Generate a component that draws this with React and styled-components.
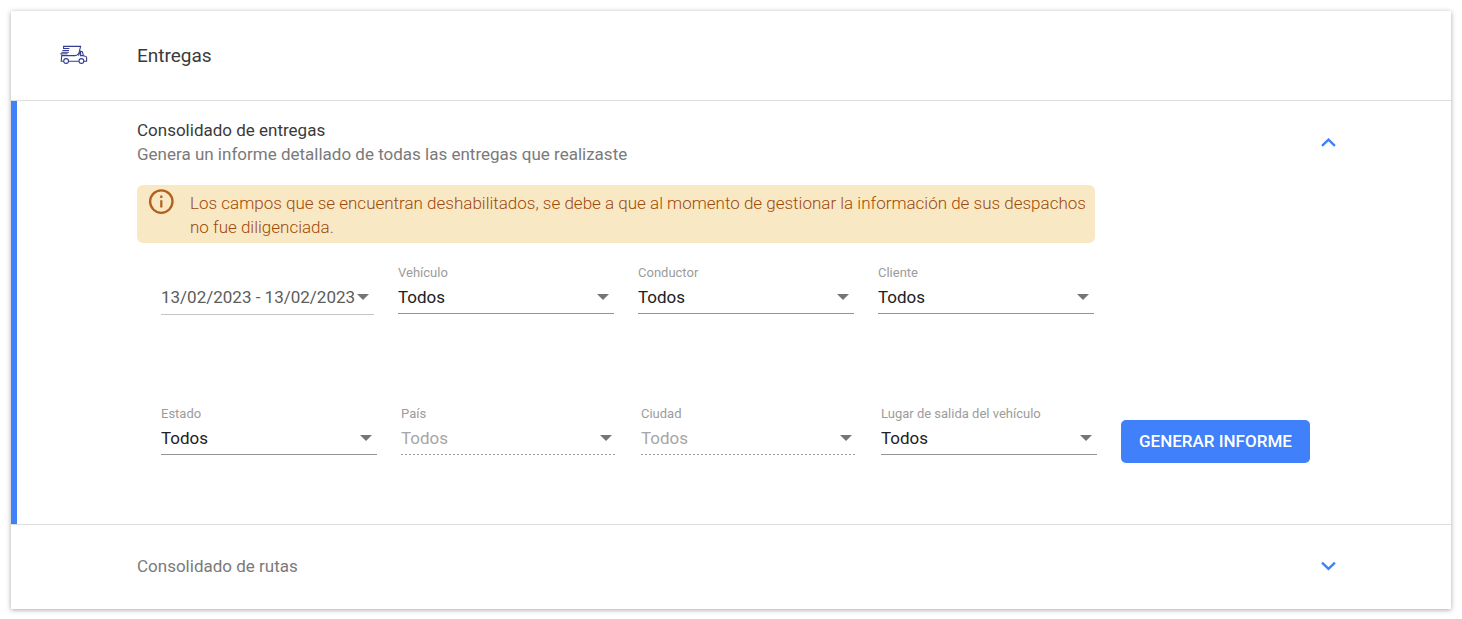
import React from "react";
import styled, { createGlobalStyle } from "styled-components";

const GlobalStyle = createGlobalStyle`
  *, *::before, *::after { box-sizing: border-box; }
  body {
    margin: 0;
    background: #fff;
    font-family: Roboto, sans-serif;
    font-size: 17px;
    font-weight: 400;
    line-height: 24px;
    color: #3a3a3a;
  }
`;

const Page = styled.main`
  padding: 11px 11px 9px;
`;

const Card = styled.section`
  background: #fff;
  box-shadow: 0 1px 5px rgba(0, 0, 0, 0.34);
`;

const CardHeader = styled.header`
  display: grid;
  grid-template-columns: 126px 1fr;
  align-items: center;
  height: 90px;
  border-bottom: 1px solid #dedede;
`;

const IconSlot = styled.div`
  display: flex;
  justify-content: center;
  padding-bottom: 2px;
`;

const Title = styled.h1`
  margin: 0;
  font-size: 19px;
  font-weight: 400;
`;

const Panel = styled.article`
  padding: 0 0 0 120px;
  border-left: 6px solid ${(p) => (p.$open ? "#4080fb" : "transparent")};
  min-height: ${(p) => (p.$open ? "423px" : "0")};
`;

const PanelHeader = styled.div`
  display: flex;
  align-items: center;
  justify-content: space-between;
  height: 84px;
  padding: 0 115px 2px 0;
`;

const PanelTitle = styled.h2`
  margin: 0;
  font-size: 17px;
  font-weight: 400;
  color: ${(p) => (p.$muted ? "#7a7a7a" : "#3a3a3a")};
`;

const PanelText = styled.p`
  margin: 0;
  color: #7a7a7a;
`;

const ToggleButton = styled.button`
  display: flex;
  padding: 0;
  border: 0;
  background: none;
  color: #4080fb;
  cursor: pointer;
`;

const Notice = styled.div`
  display: flex;
  gap: 16px;
  max-width: 958px;
  padding: 6px 0 4px 11px;
  border-radius: 6px;
  background: #f9e8c4;
  color: #b4601d;

  svg { flex: none; margin-top: -2px; }
`;

const NoticeText = styled.p`
  margin: 0;
  color: #a04a08;
  font-weight: 300;
`;

const Filters = styled.form`
  display: grid;
  gap: 89px;
  padding: 20px 24px 0;
`;

const FilterRow = styled.div`
  display: flex;
  align-items: flex-start;
  gap: 24px;
`;

const Field = styled.div`
  flex: 0 1 ${(p) => p.$basis || "216px"};
  min-width: 0;
`;

const FieldLabel = styled.label`
  display: block;
  height: 21px;
  font-size: 13px;
  line-height: 20px;
  color: #9c9c9c;
  white-space: nowrap;
`;

const Control = styled.div`
  display: flex;
  align-items: center;
  height: 30px;
  padding: 0 5px 3px 0;
  border-bottom: 1px solid #949494;

  svg { flex: none; pointer-events: none; }
`;

const DisabledControl = styled(Control)`
  padding-bottom: 4px;
  border-bottom: 0;
  background: repeating-linear-gradient(to right, #a0a0a0 0 2px, transparent 2px 4px) left bottom / 100% 1px no-repeat;
`;

const DateControl = styled(Control)`
  height: 31px;
  padding-bottom: 4px;
  border-bottom-color: #c4c4c4;
`;

const Select = styled.select`
  flex: 1;
  min-width: 0;
  padding: 0;
  border: 0;
  appearance: none;
  background: none;
  font: inherit;
  color: #212121;

  &:disabled { color: #a6a6a6; opacity: 1; }
`;

const DateInput = styled.input`
  flex: 1;
  min-width: 0;
  padding: 0;
  border: 0;
  background: none;
  font: inherit;
  color: #5c5c5c;
`;

const SubmitButton = styled.button`
  flex: none;
  height: 43px;
  margin-top: 16px;
  padding: 0 18px 2px;
  border: 0;
  border-radius: 5px;
  background: #4080fb;
  color: #fff;
  font: 500 17px/24px Roboto, sans-serif;
  cursor: pointer;
`;

const Divider = styled.hr`
  margin: 0;
  border: 0;
  border-top: 1px solid #dedede;
`;

const Caret = () => (
  <svg width="12" height="6" viewBox="0 0 12 6" aria-hidden="true">
    <path d="M0 0h12L6 6z" fill="#757575" />
  </svg>
);

const Chevron = ({ up }) => (
  <svg width="16" height="10" viewBox="0 0 16 10" fill="none" stroke="currentColor" strokeWidth="2.4" aria-hidden="true">
    <path d={up ? "M2 8.8 8.5 2.6l6.4 6.2" : "M2 1.6 8.5 7.8l6.4-6.2"} />
  </svg>
);

const InfoIcon = () => (
  <svg width="26" height="26" viewBox="0 0 26 26" fill="none" stroke="currentColor" aria-hidden="true">
    <circle cx="13.3" cy="12.6" r="11.2" strokeWidth="2.3" />
    <path d="M13.3 11.2v7.2M13.3 6.6V9" strokeWidth="2.2" />
  </svg>
);

const TruckIcon = () => (
  <svg width="28" height="20" viewBox="0 0 28 20" fill="none" stroke="#343d91" strokeWidth="1.1" aria-hidden="true">
    <path d="M3.6 3V1.4h17l-1.4 5.8q-1 3.4-4.2 3.4H2" />
    <path d="M3 3.5h6.4M2.4 5.5h6.6M1.4 7.3h7.4M.2 8.8h7.4" strokeWidth="1" />
    <path d="M1.8 9.4 1.2 16.2h2.4M8.6 16.2h10.2M24 16.2h2.6v-3.6q0-1-1.4-1.3l-1.8-.4-.8-3.6q-.3-1-1.5-1h-1.2M18.6 10.8q.2-2.4 2-4.2v4h2.6" />
    <circle cx="6.1" cy="16" r="2.4" />
    <circle cx="21.4" cy="16" r="2.4" />
  </svg>
);

const SelectField = ({ id, label, disabled }) => {
  const Box = disabled ? DisabledControl : Control;
  return (
    <Field>
      <FieldLabel htmlFor={id}>{label}</FieldLabel>
      <Box>
        <Select id={id} disabled={disabled} defaultValue="todos">
          <option value="todos">Todos</option>
        </Select>
        <Caret />
      </Box>
    </Field>
  );
};

export default function App() {
  return (
    <>
      <GlobalStyle />
      <Page>
        <Card>
          <CardHeader>
            <IconSlot><TruckIcon /></IconSlot>
            <Title>Entregas</Title>
          </CardHeader>
          <Panel $open>
            <PanelHeader>
              <div>
                <PanelTitle>Consolidado de entregas</PanelTitle>
                <PanelText>Genera un informe detallado de todas las entregas que realizaste</PanelText>
              </div>
              <ToggleButton type="button" aria-expanded="true" aria-label="Consolidado de entregas">
                <Chevron up />
              </ToggleButton>
            </PanelHeader>
            <Notice>
              <InfoIcon />
              <NoticeText>
                Los campos que se encuentran deshabilitados, se debe a que al momento de gestionar la
                información de sus despachos no fue diligenciada.
              </NoticeText>
            </Notice>
            <Filters onSubmit={(e) => e.preventDefault()}>
              <FilterRow>
                <Field $basis="213px">
                  <FieldLabel as="div" />
                  <DateControl>
                    <DateInput aria-label="Rango de fechas" defaultValue="13/02/2023 - 13/02/2023" />
                    <Caret />
                  </DateControl>
                </Field>
                <SelectField id="vehiculo" label="Vehículo" />
                <SelectField id="conductor" label="Conductor" />
                <SelectField id="cliente" label="Cliente" />
              </FilterRow>
              <FilterRow>
                <SelectField id="estado" label="Estado" />
                <SelectField id="pais" label="País" disabled />
                <SelectField id="ciudad" label="Ciudad" disabled />
                <SelectField id="salida" label="Lugar de salida del vehículo" />
                <SubmitButton type="submit">GENERAR INFORME</SubmitButton>
              </FilterRow>
            </Filters>
          </Panel>
          <Divider />
          <Panel>
            <PanelHeader>
              <PanelTitle $muted>Consolidado de rutas</PanelTitle>
              <ToggleButton type="button" aria-expanded="false" aria-label="Consolidado de rutas">
                <Chevron />
              </ToggleButton>
            </PanelHeader>
          </Panel>
        </Card>
      </Page>
    </>
  );
}
